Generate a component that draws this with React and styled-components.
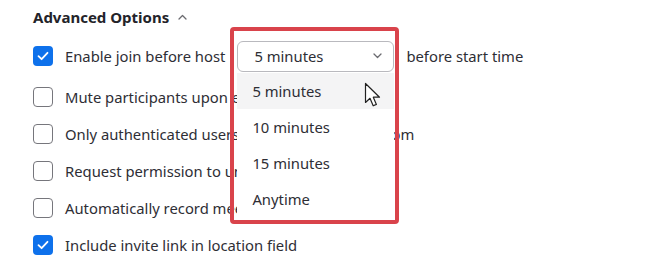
import styled, { createGlobalStyle } from "styled-components";

const GlobalStyle = createGlobalStyle`
    body {
        margin: 0;
        background: #ffffff;
        font-family: "Noto Sans", "Open Sans", sans-serif;
        color: #2e2e35;
    }
`;

const options = [
    { label: "Enable join before host", checked: true, select: true },
    { label: "Mute participants upon entry", checked: false },
    { label: "Only authenticated users can join: Sign in to Zoom", checked: false },
    { label: "Request permission to unmute participants", checked: false },
    { label: "Automatically record meeting", checked: false },
    { label: "Include invite link in location field", checked: true },
];

const choices = ["5 minutes", "10 minutes", "15 minutes", "Anytime"];

const Check = () => (
    <svg width="12" height="10" viewBox="0 0 12 10">
        <path d="M1.5 5.2 L4.6 8.2 L10.5 1.8" fill="none" stroke="#fff" strokeWidth="1.8" strokeLinecap="round" strokeLinejoin="round" />
    </svg>
);

const Chevron = ({ up }) => (
    <svg width="9" height="6" viewBox="0 0 9 6">
        <path d={up ? "M1 5 L4.5 1.5 L8 5" : "M1 1 L4.5 4.5 L8 1"} fill="none" stroke="#6b6b70" strokeWidth="1.3" strokeLinecap="round" strokeLinejoin="round" />
    </svg>
);

const Cursor = () => (
    <CursorIcon width="20" height="26" viewBox="0 0 20 26">
        <path d="M1.5 1.5 L1.5 20.5 L6 16.3 L9.2 23.8 L12.4 22.4 L9.3 15.2 L15.5 15.2 Z" fill="#fff" stroke="#222" strokeWidth="1.2" strokeLinejoin="round" />
    </CursorIcon>
);

const CheckBox = ({ checked }) => (
    <Box $checked={checked}>{checked && <Check />}</Box>
);

const App = () => {
    return (
        <>
            <GlobalStyle />
            <Page>
                <Header>
                    Advanced Options
                    <Chevron up />
                </Header>
                <List>
                    {options.map((item, index) => (
                        <Row key={index} $tall={item.select}>
                            <CheckBox checked={item.checked} />
                            <Label>{item.label}</Label>
                            {item.select && (
                                <>
                                    <SelectWrap>
                                        <Select>
                                            <span>5 minutes</span>
                                            <Chevron />
                                        </Select>
                                        <Menu>
                                            {choices.map((c, i) => (
                                                <MenuItem key={c} $active={i === 0}>{c}</MenuItem>
                                            ))}
                                            <Cursor />
                                        </Menu>
                                        <Highlight />
                                    </SelectWrap>
                                    <Label>before start time</Label>
                                </>
                            )}
                        </Row>
                    ))}
                </List>
            </Page>
        </>
    );
};

export default App;

const Page = styled.div`
    padding: 4px 0 0 33px;
`

const Header = styled.div`
    display: flex;
    align-items: center;
    gap: 9px;
    height: 26px;
    margin-bottom: 5px;
    font-size: 15px;
    font-weight: bold;
    color: #232329;
`

const List = styled.div`
    display: flex;
    flex-direction: column;
`

const Row = styled.div`
    display: flex;
    align-items: center;
    gap: 12px;
    height: ${(p) => (p.$tall ? "42px" : "37px")};
    padding-bottom: ${(p) => (p.$tall ? "1px" : "0")};
`

const Box = styled.div`
    box-sizing: border-box;
    width: 20px;
    height: 20px;
    flex: none;
    border-radius: 4px;
    border: ${(p) => (p.$checked ? "none" : "1.5px solid #76767c")};
    background: ${(p) => (p.$checked ? "#0e71eb" : "#fff")};
    display: flex;
    align-items: center;
    justify-content: center;
`

const Label = styled.span`
    font-size: 14.8px;
    white-space: nowrap;
    color: #2e2e35;
`

const SelectWrap = styled.div`
    position: relative;
    z-index: 2;
`

const Select = styled.div`
    box-sizing: border-box;
    width: 157px;
    height: 31px;
    border: 1px solid #b9b9be;
    border-radius: 6px;
    background: #fff;
    display: flex;
    align-items: center;
    justify-content: space-between;
    padding: 0 11px 0 16px;
    font-size: 14.8px;
`

const Menu = styled.div`
    position: absolute;
    top: 32px;
    left: 0;
    width: 157px;
    padding: 0 0 2px;
    background: #fff;
    box-sizing: border-box;
`

const MenuItem = styled.div`
    height: 36px;
    display: flex;
    align-items: center;
    padding-left: 15px;
    font-size: 14.8px;
    background: ${(p) => (p.$active ? "#f4f4f5" : "transparent")};
`

const CursorIcon = styled.svg`
    position: absolute;
    left: 127px;
    top: 9px;
`

const Highlight = styled.div`
    position: absolute;
    left: -7px;
    top: -14px;
    width: 169px;
    height: 197px;
    box-sizing: border-box;
    border: 4px solid #d9434b;
    border-radius: 4px;
    pointer-events: none;
`
